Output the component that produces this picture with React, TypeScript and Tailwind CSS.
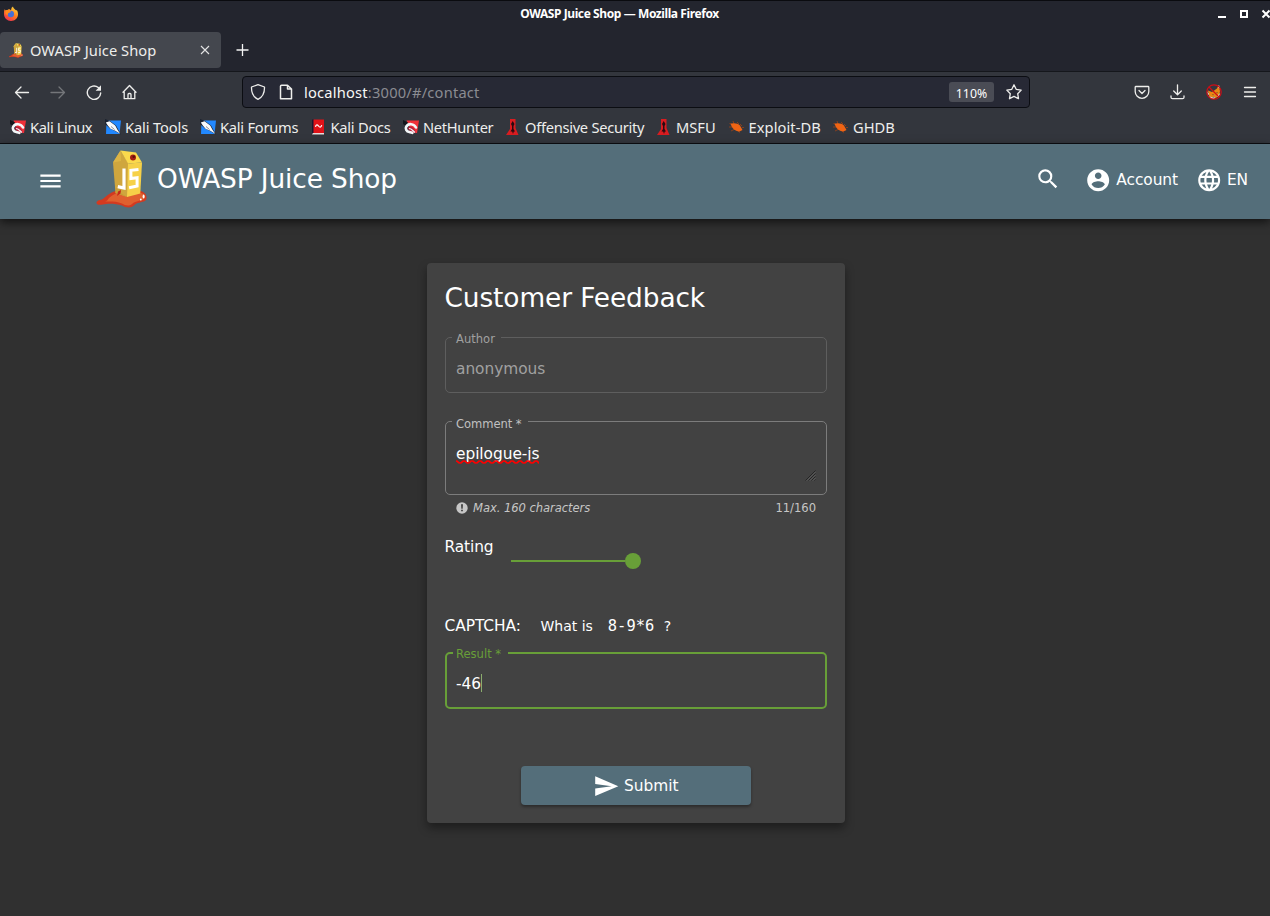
import React from 'react';

const CHROME = "font-['Noto_Sans',sans-serif]";

function FirefoxLogo() {
  return (
    <svg width="16" height="16" viewBox="0 0 16 16">
      <defs>
        <linearGradient id="fx" x1="0.8" y1="0" x2="0.2" y2="1">
          <stop offset="0" stopColor="#ffdf3c" />
          <stop offset="0.5" stopColor="#ff7a1f" />
          <stop offset="1" stopColor="#ef2a55" />
        </linearGradient>
      </defs>
      <path fill="url(#fx)" d="M1.6 3.2 2.8 4.4 4.2 4.2C5 3 6 3 6.6 3.3L8 4.2 8.6 1.8 10 .6c.3 1.4 1 2 2 2.8.2 0 .5.3.8.8l.6.2.4-.5C14.700 5.200 15 6.700 15 8.300 15 12.300 11.900 15 8 15S1 12 1 8.300C1 6.300 1 4.700 1.600 3.200Z" />
      <circle cx="7.8" cy="8" r="3.200" fill="#4570d8" />
      <path fill="#ff8a1c" d="M2.500 4.500c2-.8 4-.5 5.500 1.500L5.600 7c-.8.500-1.100 1.500-.6 2.600L2.500 8Z" />
    </svg>
  );
}

function JuiceLogo({ width, height }: { width: number; height: number }) {
  return (
    <svg width={width} height={height} viewBox="0 0 51 58" preserveAspectRatio="none">
      <path fill="#d33a20" d="M1 54C-.5 52 1 50.500 6 49.500 11 46 15 41 22 40.500L45 41c5 1.500 6.500 6 5 9-2 2.500-8 2-11 4.500-3 4-9 3.500-13 1-6-2-14-2.500-19-1-3 .5-5 .5-6-.5Z" />
      <path fill="#e0602f" d="M13 48c4-4 9-6 15-6l17 1c4 1 5 4 3 6-3 2-8 1.500-12 5-3 2.500-7 1.500-10-.5-6-2.500-12-2-17-2 2-.5 3-2 4-3.500Z" />
      <path fill="#cfa63e" d="M17 12.500 24.500.5 32.500 13.500 31.500 47 19.500 43Z" />
      <path fill="#fbd94c" d="M24.500.5 40 2.500 46 12.500 32 13.500Z" />
      <path fill="#f6d148" d="m32 13.500 14-1L44.300 43.500 31 47Z" />
      <path fill="#dcb445" d="M17 12.500 24.500.5 25 11Z" />
      <path fill="#c89c36" d="m20 38 5 1-1 3.500 7 4.500L19.500 43Z" />
      <circle cx="37" cy="7.500" r="3" fill="#a41e12" />
      <circle cx="37.700" cy="6.800" r="1.200" fill="#571409" />
      <path fill="none" stroke="#fff" strokeWidth="3.200" d="M28 18.500v19.500L21.800 36.600" />
      <path fill="none" stroke="#fff" strokeWidth="3" d="m42.500 19.500-7.600.8v8.200l6.200-.7v8.200l-8 1.700" />
      <path fill="#c62818" d="M22 41.500 25 40l-.5 3.500L21 46Z" />
      <ellipse cx="47.600" cy="46.500" rx="1" ry="2" fill="#fff" />
      <circle cx="44.800" cy="49.500" r=".9" fill="#fff" />
    </svg>
  );
}

type IconProps = { children: React.ReactNode; w?: string };
function Glyph({ children, w = '1.3' }: IconProps) {
  return (
    <svg width="16" height="16" viewBox="0 0 16 16" fill="none" stroke="currentColor" strokeWidth={w} strokeLinecap="round" strokeLinejoin="round">
      {children}
    </svg>
  );
}

function DragonRed() {
  return (
    <svg width="16" height="16" viewBox="0 0 16 16">
      <path fill="#f03038" d="M3.500 1.500H16L14 14H9z" />
      <path fill="#14161c" d="M0 1 5 3.500 3 7 0 5z" />
      <path fill="#b8203a" d="M4.500 9.500C6 6.500 11 7 13 14l-5-1Z" />
      <path fill="none" stroke="#f4f6f8" strokeWidth="2.600" strokeLinecap="round" d="M13 8.500C11 4.500 5.500 4 3.300 7.500c-1.200 2 0 5 3 5.500l3 .8" />
      <path fill="none" stroke="#f4f6f8" strokeWidth="1.200" d="M6 9.500c2.500 0 3.500 2 6 4" />
    </svg>
  );
}

function DragonBlue() {
  return (
    <svg width="16" height="16" viewBox="0 0 16 16">
      <path fill="#2288ff" d="M1.500 1.500H16L14.500 15H1z" />
      <path fill="#1b2230" d="M0 0 4.500 1.800 11 6.500 14 12l2 3.500-6-3.500-5-2.500L0 5Z" />
      <path fill="#f7f9fc" d="m.8 3.500 3.700-1.200 5.700 4.200 2.300 4.200 2.700 4.100-5-3.100-4.700-1.900L3 6.700Z" />
      <path fill="none" stroke="#223" strokeWidth=".5" d="m6 7.500 3.500 3" />
    </svg>
  );
}

function DocsIcon() {
  return (
    <svg width="16" height="16" viewBox="0 0 16 16">
      <path fill="#1a1730" d="M1 .5h2V14H1z" />
      <path fill="#e01218" d="M2.500.5H13V14H2.500z" />
      <path fill="#e6dcdc" d="M2 14h11v1.500H1z" />
      <path fill="none" stroke="#fff" strokeWidth="1.200" d="M4.500 7.800C5 5 6.500 5.500 7.500 7s2.500 2 3.200-.8M5.500 9.500M10 5.500" />
    </svg>
  );
}

function OffsecIcon() {
  return (
    <svg width="16" height="16" viewBox="0 0 16 16">
      <path fill="#d91c20" d="M5 0H10.500v9l3 7H1l4-6Z" />
      <path fill="#280a10" d="M7.700 2 9.500 5l-1 2v3l1.500 2.500H8.800L8 15l-.8-2.500H5.500L7 10V7L6 5Z" />
    </svg>
  );
}

function BugIcon() {
  return (
    <svg width="16" height="16" viewBox="0 0 16 16">
      <path fill="none" stroke="#9c4316" strokeWidth=".8" d="m4 2 1 3M.5 4.500l4 1M0 8l4 0M2 12l4-2M8 3l2 2M11 5l2 2M13 8.500h2M9 12l2 1.500" />
      <path fill="#f06414" d="M1.500 4.800C5 3.500 9 4.500 11 6.500l2.500 4.500-3 1.500C5.500 12.500 3 9 1.500 4.800Z" />
    </svg>
  );
}

function FoxBlocked() {
  return (
    <svg width="16" height="16" viewBox="0 0 16 16">
      <path fill="#ea8614" d="M2 6.500 6 8l5-3.500L12.500 1l1.500 6-1 5L8 15l-5-3Z" />
      <path fill="#f2f2f2" d="m12 3 1-2 1 4ZM1 7l2 3-1 1Zm2 5 3 1.500L9 13l-1 2-3-.5Zm10-2 1-1-1 3-2 1Z" />
      <path fill="#76502c" d="m6 10 2 .5-1 1Zm4-1.500 2-.5-1 1.500Z" />
      <path fill="#8d8a8a" d="m6 13 3-.5L8 14.500Z" />
      <circle cx="8" cy="8" r="7.200" fill="none" stroke="#cf0d16" strokeWidth="1.200" />
      <path stroke="#cf0d16" strokeWidth="1.200" d="m3 3 10 10" />
    </svg>
  );
}

const bookmarks = [
  { label: 'Kali Linux', icon: <DragonRed />, cls: 'w-[95px] tracking-[-0.38px]' },
  { label: 'Kali Tools', icon: <DragonBlue />, cls: 'w-[95px] tracking-[-0.12px]' },
  { label: 'Kali Forums', icon: <DragonBlue />, cls: 'w-[110.5px] tracking-[-0.24px]' },
  { label: 'Kali Docs', icon: <DocsIcon />, cls: 'w-[92.5px] tracking-[-0.24px]' },
  { label: 'NetHunter', icon: <DragonRed />, cls: 'w-[102px] tracking-[-0.33px]' },
  { label: 'Offensive Security', icon: <OffsecIcon />, cls: 'w-[151px] tracking-[-0.28px]' },
  { label: 'MSFU', icon: <OffsecIcon />, cls: 'w-[72.500px]' },
  { label: 'Exploit-DB', icon: <BugIcon />, cls: 'w-[104.500px] tracking-[0.08px]' },
  { label: 'GHDB', icon: <BugIcon />, cls: 'w-[80px]' },
];

function Browser() {
  return (
    <div className={`${CHROME} flex h-36 flex-col border-b border-[#0c0e12] bg-[#33363d] text-[#eeeeec]`}>
      <div className="h-[72px] border-b border-t border-b-[#15171c] border-t-[#0a0b0f] bg-[#23252e]">
        <div className="flex h-[31px] items-start pt-[5px]">
          <div className="ml-[3px] w-[16px]"><FirefoxLogo /></div>
          <div className="flex-1 text-center text-[12px] font-bold leading-[16px] text-white"><span className="ml-[4px] tracking-[-0.41px]">OWASP Juice Shop — Mozilla Firefox</span></div>
          <svg className="-mr-[2px]" width="56" height="16" viewBox="0 0 56 16">
            <path fill="#fff" d="M2 10h8v2H2zM24 4h8v8h-8zm2 2v4h4V6z" fillRule="evenodd" />
            <path stroke="#fff" strokeWidth="2" d="m46.500 4.500 7 7m0-7-7 7" />
          </svg>
        </div>
        <div className="flex h-9 items-center">
          <div className="flex h-9 w-[221px] items-center rounded bg-[#44474e] pl-[9px]">
            <JuiceLogo width={14} height={15} />
            <span className="ml-[7px] w-[168px] text-[14.67px] leading-5 tracking-[0.06px]">OWASP Juice Shop</span>
            <svg className="mb-[1px]" width="14" height="14" viewBox="0 0 14 14" stroke="#e4e4e4" strokeWidth="1.100"><path d="m3 3 8 8m0-8-8 8" /></svg>
          </div>
          <svg className="ml-[15px]" width="14" height="14" viewBox="0 0 14 14" stroke="#f4f4f4" strokeWidth="1.300"><path d="M6.500 1v12M.5 7h12" /></svg>
        </div>
      </div>
      <div className="flex h-10 items-center pt-[1px]">
        <div className="ml-[14px] flex w-[228px] items-center gap-5 pt-[1px]">
          <Glyph><path d="M14.500 8.500H1.500M7 3 1.500 8.500 7 14" /></Glyph>
          <span className="text-[#74767a]"><Glyph><path d="M1 8.500h13.500M9 3 14.500 8.500 9 14" /></Glyph></span>
          <svg width="16" height="16" viewBox="0 0 16 16" fill="none" stroke="currentColor" strokeWidth="1.400" strokeLinecap="round"><path d="M14.700 9A6.700 6.700 0 1 1 12.300 3.500" /><path fill="currentColor" stroke="none" d="M15 1.300v5.400H9.600z" /></svg>
          <Glyph><path d="M1 8.200 7.500 1.500l6.500 6.700M2.200 7v7.700h10.600V7M6 14.500V10.500q0-1 1-1h1q1 0 1 1v4" /></Glyph>
        </div>
        <div className="mt-[1px] flex h-8 w-[788px] items-center rounded border border-[#0b0d12] bg-[#272935] pl-[7px]">
          <Glyph><path d="M8 .7 14.500 3c.2 6-1.500 10-6.500 12.300C3 13 1.300 9 1.500 3Z" /></Glyph>
          <span className="ml-3"><Glyph w="1.500"><path d="M3.500 1.200h6L13.500 5v9.800h-11V2.200q0-1 1-1ZM9.500 1.500V5h3.800" /></Glyph></span>
          <span className="ml-[10px] flex-1 text-[14.67px] leading-5 tracking-[0.21px] text-[#8b8c92]"><span className="text-[#f7f7f7]">localhost</span>:3000/#/contact</span>
          <span className="flex h-5 w-[45px] items-center justify-center rounded-[3px] bg-[#4a4c55] pt-[3px] text-[12.3px] text-white">110%</span>
          <span className="ml-3 mr-[7px]"><Glyph><path d="m8 .8 2.200 4.500 5 .8-3.500 3.600.8 5L8 12.400l-4.500 2.300.8-5L.8 6.100l5-.8Z" /></Glyph></span>
        </div>
        <div className="ml-[104px] flex items-center gap-5">
          <Glyph><path d="M2 2.500h12q.8 0 .8.800V7.500a6.800 6.800 0 0 1-13.600 0V3.300Q1.200 2.500 2 2.500ZM5 6.500l3 3 3-3" /></Glyph>
          <Glyph><path d="M7.500 .8v9.700M3.700 7 7.500 10.700 11.300 7M1 12v1.200q0 1.500 1.500 1.500h10q1.500 0 1.500-1.500V12" /></Glyph>
          <FoxBlocked />
          <Glyph w="1.300"><path d="M2.500 3.500h11M2.500 8h11M2.500 12.500h11" /></Glyph>
        </div>
      </div>
      <div className="flex h-8 items-center pl-[10px]">
        {bookmarks.map((b) => (
          <div key={b.label} className={`${b.cls} flex shrink-0 items-center gap-1 whitespace-nowrap text-[14.67px] leading-5`}>
            <span className="h-4 w-4 shrink-0">{b.icon}</span>{b.label}
          </div>
        ))}
      </div>
    </div>
  );
}

function Toolbar() {
  return (
    <header className="relative flex h-[75px] items-center bg-[#546e7a] text-white shadow-[0_3px_9px_rgba(0,0,0,0.65)]">
      <svg className="mb-[2px] ml-[37px] shrink-0" width="27" height="26" viewBox="0 0 24 24" fill="currentColor" preserveAspectRatio="none"><path d="M3 18h18v-2H3v2zm0-5h18v-2H3v2zm0-7v2h18V6H3z" /></svg>
      <div className="mb-[5px] ml-[32px] shrink-0"><JuiceLogo width={51} height={58} /></div>
      <span className="mb-[6px] ml-[10px] whitespace-nowrap text-[26.4px] leading-8 tracking-[-0.12px]">OWASP Juice Shop</span>
      <div className="ml-auto flex items-center text-[15.4px]">
        <svg className="mb-[5px]" width="26" height="26" viewBox="0 0 24 24" fill="currentColor"><path d="M15.500 14h-.79l-.28-.27A6.471 6.471 0 0 0 16 9.500 6.500 6.500 0 1 0 9.500 16c1.610 0 3.090-.59 4.230-1.570l.27.28v.79l5 4.990L20.490 19l-4.990-5zm-6 0C7.010 14 5 11.990 5 9.500S7.010 5 9.500 5 14 7.010 14 9.500 11.990 14 9.500 14z" /></svg>
        <svg className="mb-[3px] ml-[24px]" width="26.400" height="26.400" viewBox="0 0 24 24" fill="currentColor"><path d="M12 2C6.480 2 2 6.480 2 12s4.480 10 10 10 10-4.480 10-10S17.520 2 12 2zm0 3c1.660 0 3 1.340 3 3s-1.340 3-3 3-3-1.340-3-3 1.340-3 3-3zm0 14.200a7.200 7.200 0 0 1-6-3.220c.03-1.990 4-3.080 6-3.080 1.990 0 5.970 1.090 6 3.080a7.200 7.200 0 0 1-6 3.220z" /></svg>
        <span className="mb-[2px] ml-[5px] tracking-[-0.05px]">Account</span>
        <svg className="mb-[3px] ml-[17.5px]" width="26.400" height="26.400" viewBox="0 0 24 24" fill="currentColor"><path d="M11.990 2C6.470 2 2 6.480 2 12s4.470 10 9.990 10C17.520 22 22 17.520 22 12S17.520 2 11.990 2zm6.930 6h-2.950a15.650 15.650 0 0 0-1.380-3.560A8.030 8.030 0 0 1 18.920 8zM12 4.040c.83 1.200 1.480 2.530 1.910 3.960h-3.820c.43-1.430 1.080-2.760 1.910-3.960zM4.260 14C4.100 13.360 4 12.690 4 12s.1-1.360.26-2h3.380c-.08.66-.14 1.320-.14 2s.06 1.340.14 2H4.260zm.82 2h2.950c.32 1.250.78 2.450 1.380 3.560A7.987 7.987 0 0 1 5.080 16zm2.950-8H5.080a7.987 7.987 0 0 1 4.330-3.560A15.650 15.650 0 0 0 8.030 8zM12 19.960c-.83-1.200-1.480-2.530-1.910-3.960h3.820c-.43 1.430-1.080 2.760-1.910 3.960zM14.340 14H9.660c-.09-.66-.16-1.320-.16-2s.07-1.350.16-2h4.680c.09.65.16 1.320.16 2s-.07 1.340-.16 2zm.25 5.560c.6-1.110 1.060-2.310 1.380-3.560h2.950a8.030 8.030 0 0 1-4.330 3.560zM16.360 14c.08-.66.14-1.320.14-2s-.06-1.340-.14-2h3.380c.16.64.26 1.310.26 2s-.1 1.360-.26 2h-3.380z" /></svg>
        <span className="mb-[2px] ml-[5px] mr-[22px] tracking-[-0.1px]">EN</span>
      </div>
    </header>
  );
}

export default function App() {
  return (
    <div className="h-[916px] w-[1270px] overflow-hidden bg-[#303030] font-['DejaVu_Sans',sans-serif]">
      <Browser />
      <Toolbar />
      <main className="ml-[427px] mt-11 flex h-[560px] w-[418px] flex-col rounded bg-[#424242] px-[18px] text-[15.4px] text-white shadow-[0_5px_10px_rgba(0,0,0,0.4)]">
        <h1 className="-ml-[0.5px] mt-[19px] h-8 whitespace-nowrap text-[26.4px] leading-8 tracking-[-0.1px]">Customer Feedback</h1>
        <div className="relative mt-[23px] flex h-14 items-center rounded-[5px] border border-[#5e5e5e] pl-[10px] pt-[9px] text-[#a0a0a0]">
          <span className="absolute left-[6px] top-[-7px] w-[49px] bg-[#424242] pl-1 text-[11.55px] leading-4">Author</span>
          <span className="tracking-[-0.05px]">anonymous</span>
        </div>
        <div className="relative mt-7 h-[74px] rounded-[5px] border border-[#7c7c7c] pl-[10px] pt-[22px]">
          <span className="absolute left-[6px] top-[-6px] w-[76px] bg-[#424242] pl-1 text-[11.55px] leading-4 tracking-[-0.05px] text-[#c0c0c0]">Comment *</span>
          <span className="block leading-5 tracking-[-0.05px]">epilogue-js</span>
          <svg className="absolute left-[10px] top-[38px]" width="83" height="4" viewBox="0 0 83 4"><path fill="none" stroke="#f00" strokeWidth="1.700" d="M0 1q1.500 0 2 1t2 1 2-1 2-1 2 1 2 1 2-1 2-1 2 1 2 1 2-1 2-1 2 1 2 1 2-1 2-1 2 1 2 1 2-1 2-1 2 1 2 1 2-1 2-1 2 1 2 1 2-1 2-1 2 1 2 1 2-1 2-1 2 1 2 1 2-1 2-1 2 1 2 1 2-1 2-1 2 1 2 1 2-1" /></svg>
          <svg className="absolute bottom-[13px] right-[10px]" width="11" height="11" viewBox="0 0 11 11" stroke="#222" strokeWidth=".9"><path d="M.5 10.500l10-10M3.500 10.500l7-7M6.500 10.500l4-4M9.500 10.500l1-1" /><path stroke="#7a7a7a" strokeWidth=".6" d="m1.800 10.700 9-9M4.800 10.700l6-6M7.800 10.700l3-3" /></svg>
        </div>
        <div className="mt-[5px] flex h-4 items-center pl-[11px] pr-[11px] text-[11.55px] leading-4 text-[#c6c6c6]">
          <svg width="12" height="12" viewBox="0 0 12 12"><circle cx="6" cy="6" r="5.700" fill="#c6c6c6" /><path fill="#424242" d="M5 2.300h2l-.3 4.400H5.300zM5.100 7.700h1.800v1.600H5.100z" /></svg>
          <span className="ml-[5px] italic tracking-[-0.05px]">Max. 160 characters</span>
          <span className="ml-auto">11/160</span>
        </div>
        <div className="mt-[21px] flex h-[60px] items-start">
          <span className="-ml-[0.5px] leading-5 tracking-[-0.1px]">Rating</span>
          <div className="ml-[17.5px] mt-[16px] flex h-4 w-[130px] items-center">
            <div className="h-[2px] flex-1 bg-[#689f38]" />
            <div className="h-4 w-4 rounded-full bg-[#689f38]" />
          </div>
        </div>
        <div className="mt-[19px] flex h-5 items-center whitespace-nowrap leading-5">
          <span className="-ml-[0.5px] tracking-[-0.05px]">CAPTCHA:</span>
          <span className="ml-[19.5px] text-[14px]">What is</span>
          <span className="ml-[15px] font-['DejaVu_Sans_Mono',monospace]">8-9*6</span>
          <span className="ml-[9.5px] text-[14px]">?</span>
        </div>
        <div className="relative mt-[16px] flex h-[57px] shrink-0 items-center rounded-[5px] border-2 border-[#689f38] pl-[9px] pt-[8px]">
          <span className="absolute left-[6px] top-[-8px] w-[55px] bg-[#424242] pl-[3px] text-[11.55px] leading-4 text-[#689f38]">Result *</span>
          -46<span className="mb-[3px] h-[18px] w-px bg-[#8bac6d]" />
        </div>
        <button className="mx-auto mt-[57px] flex h-[39px] w-[230px] shrink-0 items-center justify-center rounded bg-[#546e7a] shadow-[0_2px_3px_rgba(0,0,0,0.35)]">
          <svg className="-ml-[1px] mt-[2px]" width="26.400" height="26.400" viewBox="0 0 24 24" fill="#fff"><path d="M2.010 21 23 12 2.010 3 2 10l15 2-15 2z" /></svg>
          <span className="ml-[5px] mt-[2px]">Submit</span>
        </button>
      </main>
    </div>
  );
}
